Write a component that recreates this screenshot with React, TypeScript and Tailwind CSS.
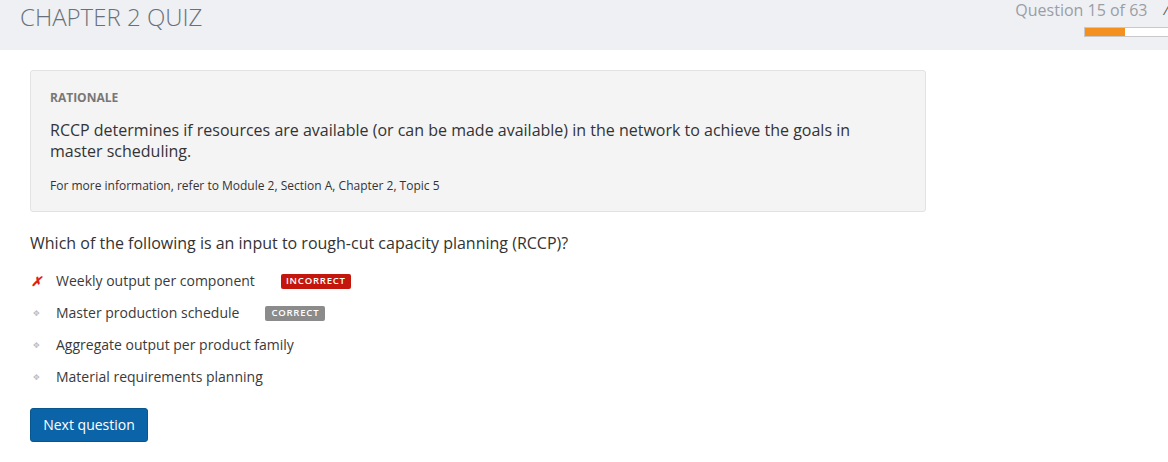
import React from 'react';

const options = [
  { text: 'Weekly output per component', status: 'incorrect' },
  { text: 'Master production schedule', status: 'correct' },
  { text: 'Aggregate output per product family', status: '' },
  { text: 'Material requirements planning', status: '' },
];

export default function App() {
  return (
    <div className="w-[1168px] h-[462px] bg-white overflow-hidden font-['Open_Sans',sans-serif]">
      {/* Header */}
      <div className="h-[50px] bg-[#eff0f4] flex justify-between">
        <h1 className="pl-[20px] pt-[1px] text-[24px] font-light text-[#6a7079] leading-[32px]">
          CHAPTER 2 QUIZ
        </h1>
        <div className="flex flex-col items-end">
          <div className="flex items-start">
            <span className="text-[16px] text-[#9a9ea5] leading-[20px]">Question 15 of 63</span>
            <span className="ml-[16px] text-[13px] italic text-[#555] leading-[20px]">/</span>
          </div>
          <div className="mt-[7px] w-[84px] h-[10px] border border-[#c8c8c8] border-r-0 bg-white flex">
            <div className="w-[40px] h-full bg-[#f4901e]" />
          </div>
        </div>
      </div>

      <div className="pl-[30px] pt-[20px]">
        {/* Rationale */}
        <div className="w-[896px] h-[142px] bg-[#f4f4f4] border border-[#e2e2e2] rounded-[3px] px-[19px] pt-[19px]">
          <div className="text-[12px] font-bold text-[#777] leading-[16px]">RATIONALE</div>
          <p className="mt-[14px] text-[16px] text-[#333] leading-[21px] w-[820px]">
            RCCP determines if resources are available (or can be made available) in the network to achieve the goals in master scheduling.
          </p>
          <p className="mt-[16px] text-[12px] text-[#333] leading-[16px]">
            For more information, refer to Module 2, Section A, Chapter 2, Topic 5
          </p>
        </div>

        {/* Question */}
        <p className="mt-[20px] text-[16px] text-[#333] leading-[22px]">
          Which of the following is an input to rough-cut capacity planning (RCCP)?
        </p>

        <ul className="mt-[11px] flex flex-col">
          {options.map((o) => (
            <li key={o.text} className="h-[32px] flex items-center">
              <span className="w-[26px] flex items-center pl-[1px]">
                {o.status === 'incorrect' ? (
                  <span className="text-[13px] font-bold italic text-[#e0201a] leading-none">✗</span>
                ) : (
                  <span className="text-[8px] text-[#bbb] leading-none pl-[2px]">✥</span>
                )}
              </span>
              <span className="text-[14px] text-[#3a3a3a] leading-[20px]">{o.text}</span>
              {o.status === 'incorrect' && (
                <span className="ml-[26px] h-[15px] w-[70px] justify-center rounded-[2px] bg-[#c4160c] text-white text-[9.5px] font-semibold tracking-[0.8px] flex items-center">
                  INCORRECT
                </span>
              )}
              {o.status === 'correct' && (
                <span className="ml-[26px] h-[15px] w-[60px] justify-center rounded-[2px] bg-[#8b8b8b] text-white text-[9.5px] font-semibold tracking-[0.8px] flex items-center">
                  CORRECT
                </span>
              )}
            </li>
          ))}
        </ul>

        <button className="mt-[15px] w-[118px] h-[34px] bg-[#0b64a8] border border-[#0a578f] rounded-[3px] text-white text-[14px] leading-none">
          Next question
        </button>
      </div>
    </div>
  );
}
